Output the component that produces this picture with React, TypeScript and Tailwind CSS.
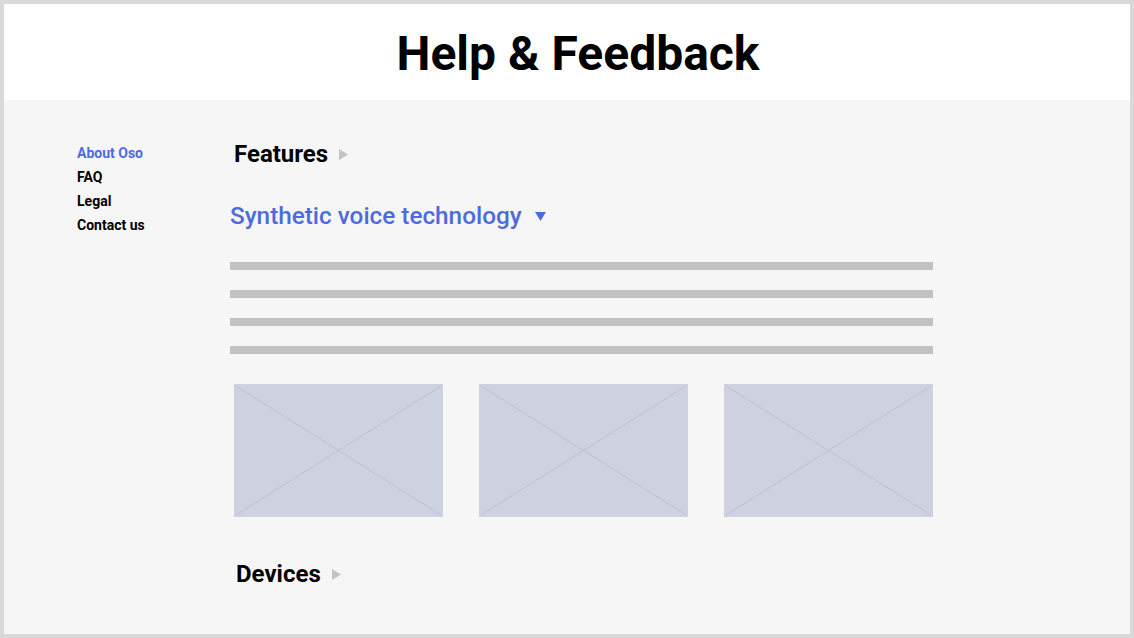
const sideLinks = [
  { label: "About Oso", active: true },
  { label: "FAQ", active: false },
  { label: "Legal", active: false },
  { label: "Contact us", active: false },
];

function Placeholder() {
  return (
    <div className="h-[133px] w-[209px] bg-[#ced1df]">
      <svg width="209" height="133" viewBox="0 0 209 133" className="block">
        <line x1="2" y1="2" x2="207" y2="131" stroke="#bdc0d0" strokeWidth="1" />
        <line x1="207" y1="2" x2="2" y2="131" stroke="#bdc0d0" strokeWidth="1" />
      </svg>
    </div>
  );
}

function RightArrow() {
  return (
    <svg width="9" height="11" viewBox="0 0 9 11" className="block">
      <polygon points="0,0 9,5.5 0,11" fill="#c4c4c4" />
    </svg>
  );
}

export default function App() {
  return (
    <div
      className="flex h-[638px] w-[1134px] flex-col border-4 border-[#d9d9d9] bg-white"
      style={{ fontFamily: "Roboto, 'Liberation Sans', sans-serif" }}
    >
      {/* Header */}
      <header className="flex h-[96px] shrink-0 items-center justify-center bg-white pl-[22px] pt-[4px]">
        <h1 className="text-[48px] font-bold leading-none text-black">Help &amp; Feedback</h1>
      </header>

      <div className="flex flex-1 bg-[#f6f6f6]">
        {/* Sidebar */}
        <nav className="w-[226px] shrink-0 pl-[73px] pt-[41px]">
          <ul className="flex flex-col">
            {sideLinks.map((l) => (
              <li
                key={l.label}
                className={`text-[14px] font-bold leading-[24px] ${l.active ? "text-[#4d6be0]" : "text-black"}`}
              >
                {l.label}
              </li>
            ))}
          </ul>
        </nav>

        {/* Content */}
        <main className="flex w-[703px] flex-col pt-[39px]">
          <div className="flex items-center gap-[11px] pl-[4px]">
            <h2 className="text-[24px] font-bold leading-[30px] text-black">Features</h2>
            <RightArrow />
          </div>

          <div className="mt-[31px] flex items-center gap-[13px]">
            <h2 className="text-[24.3px] font-medium leading-[32px] text-[#4d6be0]">Synthetic voice technology</h2>
            <svg width="11" height="9" viewBox="0 0 11 9" className="block">
              <polygon points="0,0 11,0 5.5,9" fill="#4d6be0" />
            </svg>
          </div>

          <div className="mt-[30px] flex flex-col gap-[20px]">
            <div className="h-[8px] bg-[#c2c2c2]" />
            <div className="h-[8px] bg-[#c2c2c2]" />
            <div className="h-[8px] bg-[#c2c2c2]" />
            <div className="h-[8px] bg-[#c2c2c2]" />
          </div>

          <div className="mt-[30px] flex gap-[36px] pl-[4px]">
            <Placeholder />
            <Placeholder />
            <Placeholder />
          </div>

          <div className="mt-[42px] flex items-center gap-[11px] pl-[6px]">
            <h2 className="text-[24px] font-bold leading-[30px] text-black">Devices</h2>
            <RightArrow />
          </div>
        </main>
      </div>
    </div>
  );
}
